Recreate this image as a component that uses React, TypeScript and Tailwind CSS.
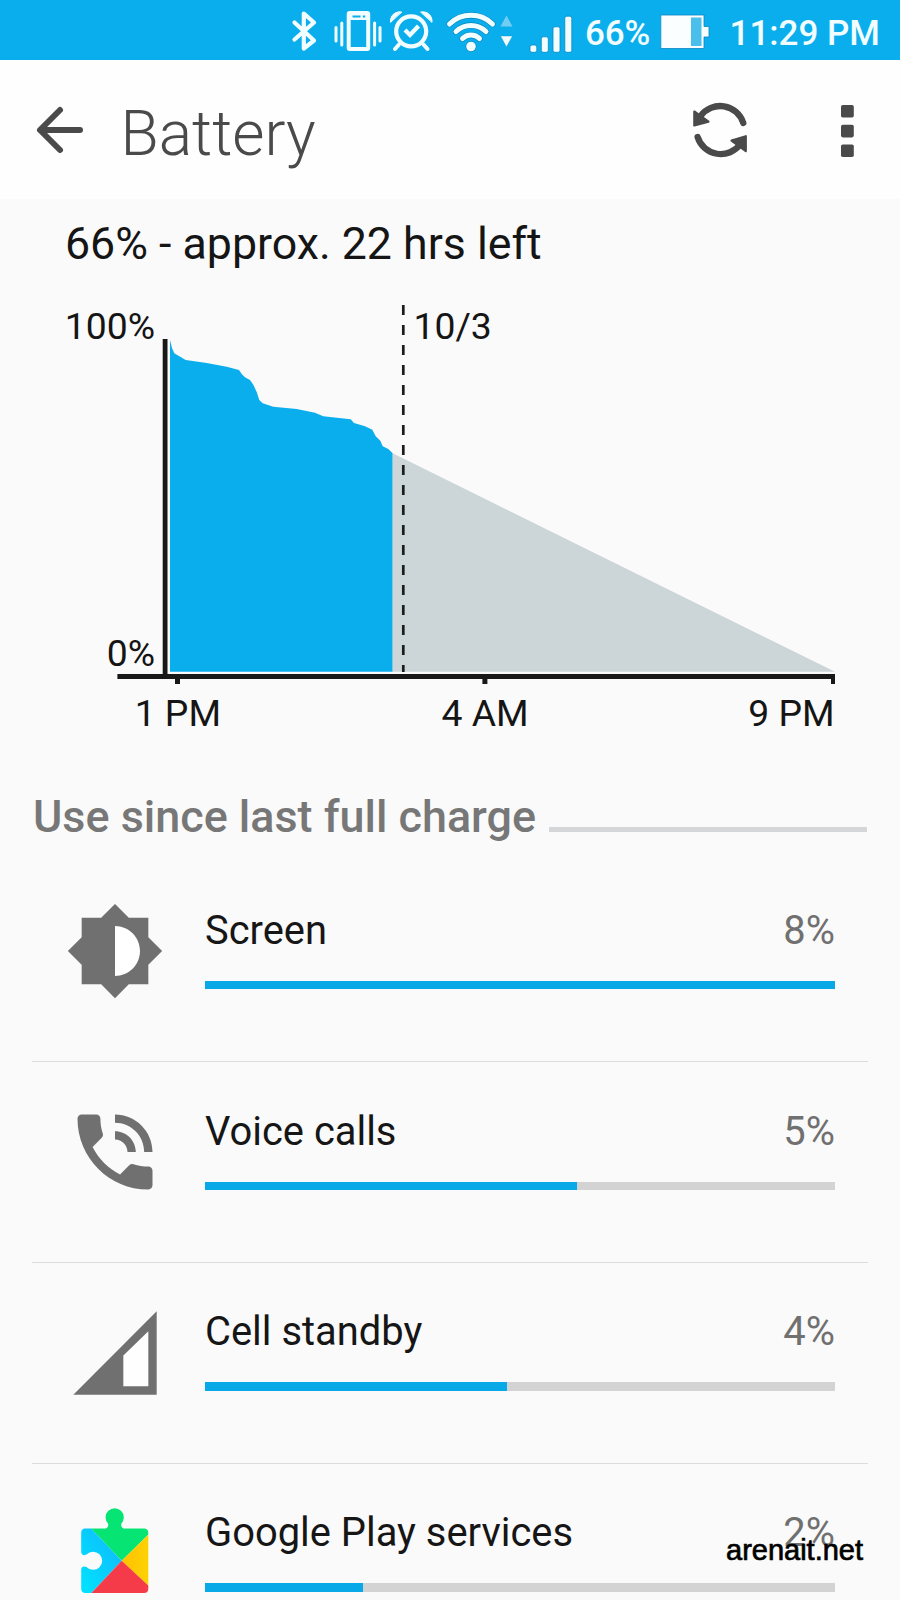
import type { ReactNode } from "react";

const STATUS = "#f2fdff";

function StatusBar() {
  return (
    <div className="flex h-[60px] shrink-0 items-center bg-[#0baeed] pl-[286px] text-[#f2fdff]">
      <svg className="h-[60px] w-[38px] shrink-0" viewBox="286 0 38 60" fill="none" stroke={STATUS} strokeWidth="4.2" strokeLinejoin="round" strokeLinecap="round">
        <path d="M294.5 22.5 L314 40.5 L303.8 48.5 V13.5 L314 22.5 L294.5 39.5" />
      </svg>
      <svg className="h-[60px] w-[62px] shrink-0" viewBox="324 0 62 60" fill="none" stroke={STATUS} strokeLinecap="round">
        <rect x="348.7" y="13" width="19.5" height="36" rx="1" strokeWidth="4" />
        <path d="M348.7 17.5 H368" strokeWidth="5" strokeLinecap="butt" />
        <path d="M352.5 16.4 H360.5 M362.8 16.4 H365.2" stroke="#0baeed" strokeWidth="2" strokeLinecap="butt" />
        <path d="M336 27.5 V41 M341.8 23 V45 M374.6 23 V45 M380 27.5 V41" strokeWidth="3" />
      </svg>
      <svg className="h-[60px] w-[50px] shrink-0" viewBox="386 0 50 60" fill="none" stroke={STATUS} strokeLinecap="round">
        <circle cx="411.2" cy="31.3" r="15" strokeWidth="4.2" />
        <path d="M405 30 L410 35 L418.5 26" strokeWidth="4.2" strokeLinecap="butt" />
        <path d="M399 44.5 L395 49 M423.5 44.5 L427.5 49" strokeWidth="4" />
        <path d="M390.5 22 A9 9 0 0 1 401.5 12 Z M432 22 A9 9 0 0 0 421 12 Z" fill={STATUS} strokeWidth="1" />
      </svg>
      <svg className="h-[60px] w-[62px] shrink-0" viewBox="436 0 62 60" fill="none" strokeLinecap="round">
        <g stroke="#0787c0" strokeWidth="6.2">
          <path d="M449.5 24 A31 31 0 0 1 492.5 24" />
          <path d="M456 31.5 A21.5 21.5 0 0 1 486 31.5" />
          <path d="M462.5 38.6 A12 12 0 0 1 479.5 38.6" />
        </g>
        <circle cx="471" cy="46.5" r="5.4" fill="#0787c0" />
        <g stroke={STATUS} strokeWidth="5">
          <path d="M449.5 24 A31 31 0 0 1 492.5 24" />
          <path d="M456 31.5 A21.5 21.5 0 0 1 486 31.5" />
          <path d="M462.5 38.6 A12 12 0 0 1 479.5 38.6" />
        </g>
        <circle cx="471" cy="46.5" r="4.8" fill={STATUS} />
      </svg>
      <svg className="h-[60px] w-[22px] shrink-0" viewBox="498 0 22 60">
        <path d="M506.5 15.5 L512.5 26.5 H500.5 Z" fill="#72cdf3" />
        <path d="M500.5 36 H512.5 L506.5 47 Z" fill={STATUS} stroke="#0a8dc6" strokeWidth=".4" />
      </svg>
      <svg className="h-[60px] w-[60px] shrink-0" viewBox="520 0 60 60" fill={STATUS} stroke="#0787c0" strokeWidth=".8">
        <rect x="530" y="45" width="6.8" height="7.3" rx="2" />
        <rect x="541.3" y="36.8" width="7" height="15.5" rx="2" />
        <rect x="553" y="26.8" width="7" height="25.5" rx="2" />
        <rect x="564.8" y="16.2" width="7" height="36.1" rx="2" />
      </svg>
      <span className="w-[76px] shrink-0 whitespace-nowrap pl-[5px] pt-[7px] text-[35px] font-medium leading-[66px] tracking-[-0.2px]">66%</span>
      <svg className="h-[60px] w-[60px] shrink-0" viewBox="656 0 60 60">
        <path d="M660.8 15 H704 V26.5 H709 V37 H704 V48.5 H660.8 Z" fill="#fbfeff" stroke="#0787c0" strokeWidth=".8" />
        <rect x="691" y="17.5" width="10.5" height="28.5" fill="#4bbfec" />
      </svg>
      <span className="whitespace-nowrap pl-[13.5px] pt-[7px] text-[35px] font-medium leading-[66px]">11:29 PM</span>
    </div>
  );
}

function Header() {
  return (
    <header className="flex h-[139px] shrink-0 items-center bg-[#fefefe] text-[#4a4a4a]">
      <svg className="ml-[32px] h-[60px] w-[60px]" viewBox="32 100 60 60" fill="none" stroke="currentColor" strokeWidth="6" strokeLinecap="round" strokeLinejoin="round">
        <path d="M60 110 L40 130 L60 150 M41 130 H80" />
      </svg>
      <h1 className="ml-[28.5px] mt-[8px] text-[62.3px] font-light leading-[72px]">Battery</h1>
      <div className="flex-1" />
      <svg className="h-[60px] w-[60px]" viewBox="690 100 60 60" fill="none" stroke="currentColor" strokeWidth="6.3" strokeLinecap="round">
        <path d="M743.3 123 A24.3 24.3 0 0 0 700.5 116" />
        <path d="M697.6 137 A24.3 24.3 0 0 0 740.5 144" />
        <path d="M694.3 111.5 L708.5 121.7 L694.3 125.5 Z M745.8 136.2 L731.5 140.5 L745.8 151 Z" fill="currentColor" strokeWidth="2.2" strokeLinejoin="round" />
      </svg>
      <svg className="ml-[72px] mr-[28px] h-[60px] w-[50px]" viewBox="822 100 50 60" fill="currentColor">
        <rect x="841" y="105" width="12.8" height="12.6" rx="1.8" />
        <rect x="841" y="124.8" width="12.8" height="12.6" rx="1.8" />
        <rect x="841" y="144.4" width="12.8" height="12.6" rx="1.8" />
      </svg>
    </header>
  );
}

function HistoryChart() {
  return (
    <svg className="block h-[480px] w-[900px] shrink-0" viewBox="0 280 900 480">
      <path
        d="M170 671.7 V340 L172 348 L174.3 353.3 L185.7 360 L206.7 363 L226.7 366.7 L239 370 L241.7 374 L245 377.3 L250 380 L253.3 384.7 L256.7 392 L259.3 400 L262.7 403.3 L273.3 406.7 L296.7 409 L315 412.7 L323.3 416.3 L350.7 419.3 L354 423 L365 426.3 L372.3 429.7 L375.7 436.3 L380.3 440.7 L382.7 446.3 L388.3 449 L392.7 453.3 V671.7 Z"
        fill="#0baeed"
      />
      <path d="M392.7 453.3 L835 671.7 H392.7 Z" fill="#ccd6d8" />
      <path d="M403.3 305 V672" stroke="#1c1c1c" strokeWidth="2.7" strokeDasharray="10 10" />
      <g fill="#181818">
        <rect x="162.7" y="339" width="4.8" height="338" />
        <rect x="117.4" y="674" width="717.6" height="5" />
        <rect x="175" y="678" width="5" height="6" />
        <rect x="482.4" y="678" width="5" height="6" />
        <rect x="831" y="678" width="4" height="6" />
      </g>
      <g fill="#151515" className="text-[37.3px]">
        <text x="155" y="339.2" textAnchor="end">100%</text>
        <text x="155" y="666.4" textAnchor="end">0%</text>
        <text x="413.5" y="339.2">10/3</text>
        <text x="177.8" y="725.9" textAnchor="middle">1 PM</text>
        <text x="485" y="725.9" textAnchor="middle">4 AM</text>
        <text x="834.5" y="725.9" textAnchor="end">9 PM</text>
      </g>
    </svg>
  );
}

function ScreenIcon() {
  return (
    <svg className="h-[100px] w-[100px]" viewBox="0 0 24 24" fill="#707070">
      <path d="M12 6h.3a6 6 0 0 1 0 12H12z" fill="#fff" />
      <path d="M20 15.31L23.31 12 20 8.69V4h-4.69L12 .69 8.69 4H4v4.69L.69 12 4 15.31V20h4.69L12 23.31 15.31 20H20v-4.69zM12 18V6c3.31 0 6 2.69 6 6s-2.69 6-6 6z" />
    </svg>
  );
}

function PhoneIcon() {
  return (
    <svg className="h-[100px] w-[100px]" viewBox="0 0 24 24" fill="#707070">
      <path d="M20 15.5c-1.25 0-2.45-.2-3.57-.57-.35-.11-.74-.03-1.02.24l-2.2 2.2c-2.83-1.44-5.15-3.75-6.59-6.59l2.2-2.21c.28-.26.36-.65.25-1C8.7 6.45 8.5 5.25 8.5 4c0-.55-.45-1-1-1H4c-.55 0-1 .45-1 1 0 9.39 7.61 17 17 17 .55 0 1-.45 1-1v-3.5c0-.55-.45-1-1-1zM19 12h2c0-4.97-4.03-9-9-9v2c3.87 0 7 3.13 7 7zm-4 0h2c0-2.76-2.24-5-5-5v2c1.66 0 3 1.34 3 3z" />
    </svg>
  );
}

function CellIcon() {
  return (
    <svg className="h-[100px] w-[100px]" viewBox="0 0 24 24">
      <path d="M2 22H22V2Z" fill="#707070" />
      <path d="M14 12.6L20 6.8V20H14Z" fill="#fefefe" />
    </svg>
  );
}

function PlayServicesIcon() {
  return (
    <svg className="h-[100px] w-[100px]" viewBox="0 0 100 100">
      <defs>
        <clipPath id="puzzle">
          <path d="M20 24.5 H41 Q44 23.5 43 19.5 A9.1 9.1 0 1 1 56.4 19.5 Q55.5 23.5 58.5 24.5 H79 Q83.3 24.5 83.3 29 V84.5 Q83.3 89 79 89 H20.5 Q16.2 89 16.2 84.5 V65 Q17 61.5 21.5 63 A9.1 9.1 0 1 0 21.5 50.5 Q17 52.5 16.2 48.5 V29 Q16.2 24.5 20 24.5 Z" />
        </clipPath>
        <linearGradient id="blue" x1="1" y1="0" x2="0" y2="1">
          <stop offset="0" stopColor="#10b4fb" />
          <stop offset="1" stopColor="#00e6ff" />
        </linearGradient>
        <linearGradient id="yellow" x1="0" y1="0" x2="1" y2="0">
          <stop offset="0" stopColor="#ffc000" />
          <stop offset="1" stopColor="#fcd303" />
        </linearGradient>
      </defs>
      <g clipPath="url(#puzzle)">
        <path d="M0 0 H100 V14.5 L56.7 56.7 L26 24.5 L12 12 Z" fill="#06e574" />
        <path d="M14 20 H21.8 L56.7 56.7 L25.4 90 H14 Z" fill="url(#blue)" />
        <path d="M56.7 56.7 L84 30 V82.5 Z" fill="url(#yellow)" />
        <path d="M56.7 56.7 L84 82.3 V90 H25.4 Z" fill="#f53a49" />
      </g>
    </svg>
  );
}

type UsageRowProps = { name: string; percent: string; fill: number; icon: ReactNode };

function UsageRow({ name, percent, fill, icon }: UsageRowProps) {
  return (
    <li className="mx-[32px] flex h-[200.9px] shrink-0 border-b-[1.5px] border-[#dcdcdc] pl-[33px] pr-[33px]">
      <div className="mt-[40px] h-[100px] w-[100px] shrink-0">{icon}</div>
      <div className="ml-[40px] flex-1 pt-[45.7px]">
        <div className="flex justify-between text-[39.9px] leading-[48px]">
          <span className="text-[#161616]">{name}</span>
          <span className="text-[#707070]">{percent}</span>
        </div>
        <div className="mt-[26px] h-[8.5px] bg-[#d3d3d3]">
          <div className="h-full bg-[#08a9e6]" style={{ width: `${fill}%` }} />
        </div>
      </div>
    </li>
  );
}

export default function App() {
  return (
    <div className="relative flex h-[1600px] w-[900px] flex-col overflow-hidden bg-[#fafafa] font-['Roboto',sans-serif]">
      <StatusBar />
      <Header />
      <div className="h-[81px] shrink-0 pl-[65px] pt-[18px] text-[44.7px] leading-[54px] text-[#151515]">
        66% - approx. 22 hrs left
      </div>
      <HistoryChart />
      <div className="flex h-[101px] shrink-0 items-start pl-[33px] pr-[33px] pt-[30px]">
        <h2 className="whitespace-nowrap text-[44.9px] font-medium leading-[54px] text-[#777777]">Use since last full charge</h2>
        <div className="ml-[13px] mt-[37px] h-[5px] flex-1 bg-[#d5d6d8]" />
      </div>
      <ul className="flex shrink-0 flex-col">
        <UsageRow name="Screen" percent="8%" fill={100} icon={<ScreenIcon />} />
        <UsageRow name="Voice calls" percent="5%" fill={59} icon={<PhoneIcon />} />
        <UsageRow name="Cell standby" percent="4%" fill={48} icon={<CellIcon />} />
        <UsageRow name="Google Play services" percent="2%" fill={25} icon={<PlayServicesIcon />} />
      </ul>
      <div className="absolute left-[726px] top-[1534px] font-['Liberation_Sans',sans-serif] text-[29px] leading-[32px] text-black [-webkit-text-stroke:0.7px_black]">
        arenait.net
      </div>
    </div>
  );
}
